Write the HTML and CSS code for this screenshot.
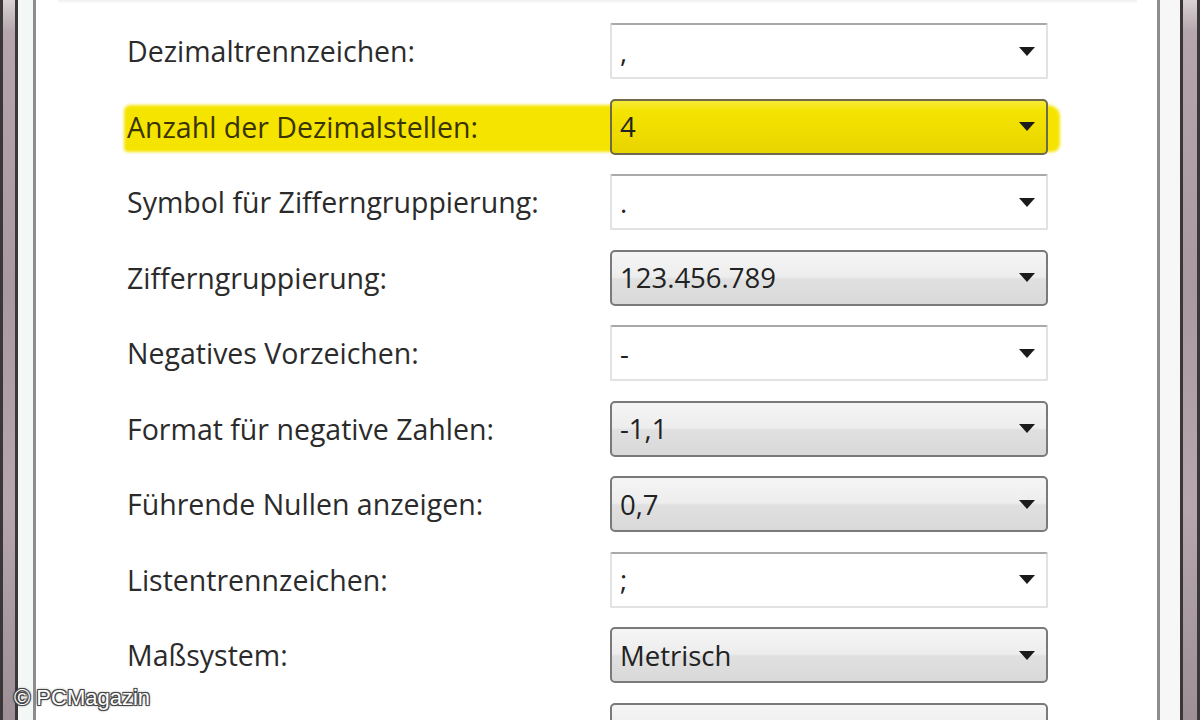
FILE: index.html
```html
<!DOCTYPE html>
<html lang="de">
<head>
  <meta charset="UTF-8" />
  <title>Zahlen anpassen</title>
  <link rel="stylesheet" href="styles.css">
</head>
<body>
  <div class="window">
    <div class="frame frame-left">
      <span class="edge"></span><span class="glass"></span><span class="edge"></span><span class="inner"></span><span class="line"></span>
    </div>

    <main class="panel">
      <div class="top-rule"></div>
      <div class="rows">
        <div class="row">
          <label>Dezimaltrennzeichen:</label>
          <div class="combo edit"><span class="value">,</span><svg class="arrow" viewBox="0 0 16 9"><path d="M0 0H16L8 9Z"/></svg></div>
        </div>
        <div class="row marked">
          <span class="marker"></span>
          <label>Anzahl der Dezimalstellen:</label>
          <div class="combo"><span class="value">4</span><svg class="arrow" viewBox="0 0 16 9"><path d="M0 0H16L8 9Z"/></svg></div>
        </div>
        <div class="row">
          <label>Symbol für Zifferngruppierung:</label>
          <div class="combo edit"><span class="value">.</span><svg class="arrow" viewBox="0 0 16 9"><path d="M0 0H16L8 9Z"/></svg></div>
        </div>
        <div class="row">
          <label>Zifferngruppierung:</label>
          <div class="combo"><span class="value">123.456.789</span><svg class="arrow" viewBox="0 0 16 9"><path d="M0 0H16L8 9Z"/></svg></div>
        </div>
        <div class="row">
          <label>Negatives Vorzeichen:</label>
          <div class="combo edit"><span class="value">-</span><svg class="arrow" viewBox="0 0 16 9"><path d="M0 0H16L8 9Z"/></svg></div>
        </div>
        <div class="row">
          <label>Format für negative Zahlen:</label>
          <div class="combo"><span class="value">-1,1</span><svg class="arrow" viewBox="0 0 16 9"><path d="M0 0H16L8 9Z"/></svg></div>
        </div>
        <div class="row">
          <label>Führende Nullen anzeigen:</label>
          <div class="combo"><span class="value">0,7</span><svg class="arrow" viewBox="0 0 16 9"><path d="M0 0H16L8 9Z"/></svg></div>
        </div>
        <div class="row">
          <label>Listentrennzeichen:</label>
          <div class="combo edit"><span class="value">;</span><svg class="arrow" viewBox="0 0 16 9"><path d="M0 0H16L8 9Z"/></svg></div>
        </div>
        <div class="row">
          <label>Maßsystem:</label>
          <div class="combo"><span class="value">Metrisch</span><svg class="arrow" viewBox="0 0 16 9"><path d="M0 0H16L8 9Z"/></svg></div>
        </div>
        <div class="row">
          <label>Standardziffern:</label>
          <div class="combo"><span class="value">0123456789</span><svg class="arrow" viewBox="0 0 16 9"><path d="M0 0H16L8 9Z"/></svg></div>
        </div>
      </div>
    </main>

    <div class="frame frame-right">
      <span class="line"></span><span class="inner"></span><span class="edge"></span><span class="glass"></span><span class="edge"></span>
    </div>
  </div>

  <div class="watermark">© PCMagazin</div>
</body>
</html>
```

FILE: styles.css
```css
body {
  margin: 0;
  height: 720px;
  overflow: hidden;
  background: #fff;
  font-family: 'Open Sans', 'Noto Sans', sans-serif;
}

.window {
  display: flex;
  height: 720px;
}

/* window borders, left and right */
.frame {
  display: flex;
  flex: none;
}

.frame span {
  display: block;
  height: 100%;
}

.frame .edge {
  width: 3px;
  background: #3b3638;
}

.frame .glass {
  width: 12px;
  background: linear-gradient(to bottom, #d9d2d5 0, #b4a6ac 32px, #a99aa1 40%, #b5a7ad 70%, #9d8f96 100%);
}

.frame .inner {
  width: 15px;
  background: #f3f7f6;
}

.frame .line {
  width: 3px;
  background: #8d8d8d;
}

.frame-right .inner {
  width: 20px;
  background: #f7f7f7;
}

.frame-right .glass {
  width: 14px;
}

.panel {
  flex: 1;
  position: relative;
  overflow: hidden;
  padding: 23px 0 0 91px;
}

.top-rule {
  position: absolute;
  top: 0;
  left: 22px;
  right: 20px;
  height: 3px;
  background: linear-gradient(to bottom, #eef0f0, #fcfcfc);
}

.rows {
  display: grid;
  grid-template-columns: 483px 438px;
  grid-auto-rows: 56px;
  row-gap: 19.5px;
}

.row {
  display: contents;
}

.row label {
  align-self: center;
  font-size: 28.5px;
  color: #2b2b2b;
  white-space: nowrap;
}

.combo {
  position: relative;
  display: flex;
  align-items: center;
  justify-content: space-between;
  box-sizing: border-box;
  padding: 0 11px 0 8px;
  border: 2px solid #7a7a7a;
  border-radius: 5px;
  background: linear-gradient(to bottom, #f5f5f5 0, #ededed 48%, #e0e0e0 52%, #d9d9d9 100%);
}

.combo.edit {
  border: 2px solid #e2e2e2;
  border-top-color: #a9a9a9;
  border-radius: 2px;
  background: #fff;
}

.combo .value {
  font-size: 27.5px;
  color: #222;
}

.arrow {
  width: 16px;
  height: 9px;
  fill: #1b1b1b;
}

/* the yellow marker stroke across the second row */
.marked > label {
  grid-area: 2 / 1;
  position: relative;
  color: #3a3400;
}

.marked > .combo {
  grid-area: 2 / 2;
  border-color: #6f6a4a;
  background: linear-gradient(to bottom, #f6ea3a 0, #f4e400 20%, #efdc00 60%, #e8d400 100%);
}

.marker {
  grid-area: 2 / 1 / 3 / 3;
  margin: 6px -12px 3px -3px;
  background: #f5e400;
  border-radius: 6px 12px 8px 4px;
  filter: blur(1.5px);
}

.watermark {
  position: absolute;
  left: 14px;
  top: 685px;
  font-family: 'Liberation Sans', Arial, sans-serif;
  font-size: 22px;
  color: #fff;
  text-shadow: -1px -1px 0 #444, 1px -1px 0 #444, -1px 1px 0 #444, 1px 1px 0 #444, 0 0 3px #000;
}
```
